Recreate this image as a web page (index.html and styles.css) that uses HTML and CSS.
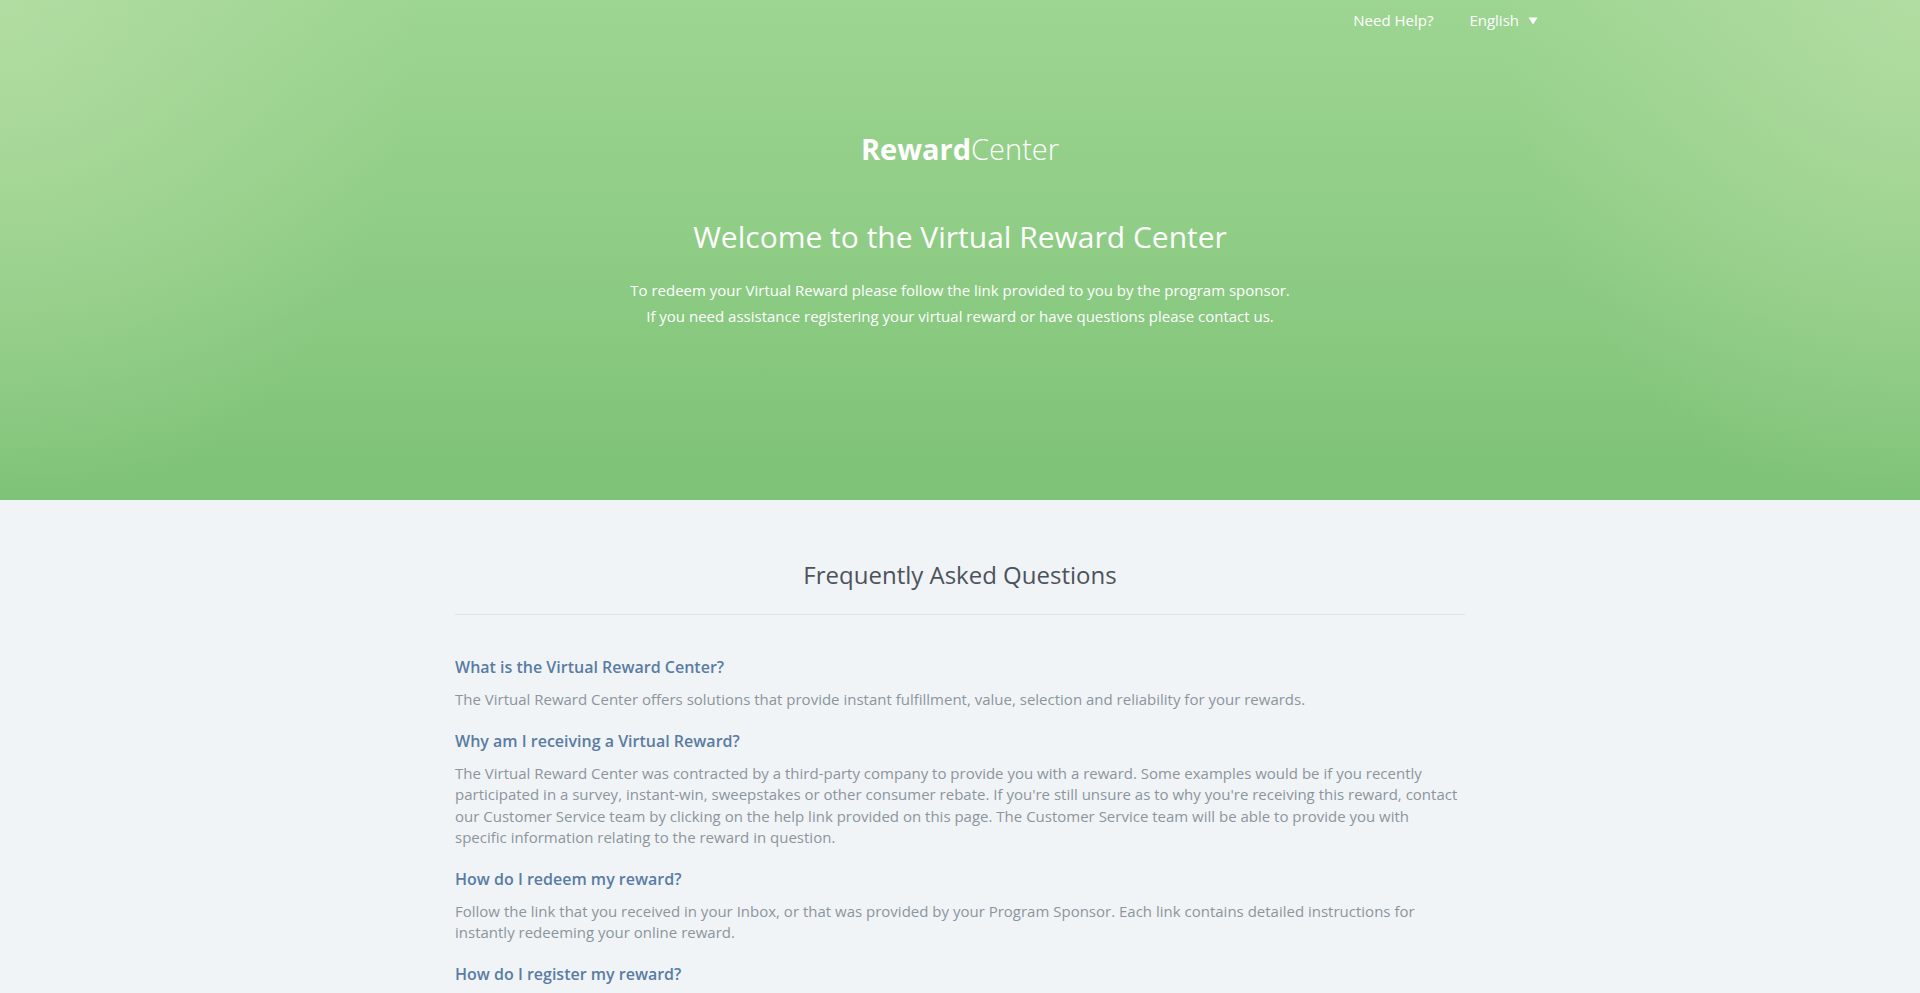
FILE: index.html
```html
<!DOCTYPE html>
<html lang="en">
<head>
<meta charset="utf-8">
<title>Virtual Reward Center</title>
<link rel="stylesheet" href="styles.css">
</head>
<body>
<header class="hero">
  <nav class="topnav">
    <a class="nav-link" href="#">Need Help?</a>
    <a class="nav-link lang" href="#">English
      <svg class="caret" width="10" height="8" viewBox="0 0 10 8" aria-hidden="true"><path d="M0.5 0.5 H9.5 L5 7.5 Z" fill="#ffffff"/></svg>
    </a>
  </nav>
  <div class="logo"><span class="logo-bold">Reward</span><span class="logo-light">Center</span></div>
  <h1 class="hero-title">Welcome to the Virtual Reward Center</h1>
  <p class="hero-text">To redeem your Virtual Reward please follow the link provided to you by the program sponsor.<br>If you need assistance registering your virtual reward or have questions please contact us.</p>
</header>
<main class="faq">
  <h2 class="faq-title">Frequently Asked Questions</h2>
  <section class="faq-list">
    <h3 class="q">What is the Virtual Reward Center?</h3>
    <p class="a">The Virtual Reward Center offers solutions that provide instant fulfillment, value, selection and reliability for your rewards.</p>
    <h3 class="q">Why am I receiving a Virtual Reward?</h3>
    <p class="a">The Virtual Reward Center was contracted by a third-party company to provide you with a reward. Some examples would be if you recently participated in a survey, instant-win, sweepstakes or other consumer rebate. If you're still unsure as to why you're receiving this reward, contact our Customer Service team by clicking on the help link provided on this page. The Customer Service team will be able to provide you with specific information relating to the reward in question.</p>
    <h3 class="q">How do I redeem my reward?</h3>
    <p class="a">Follow the link that you received in your Inbox, or that was provided by your Program Sponsor. Each link contains detailed instructions for instantly redeeming your online reward.</p>
    <h3 class="q">How do I register my reward?</h3>
    <p class="a">Follow the link that you received in your Inbox, or that was provided by your Program Sponsor. Each link contains detailed instructions for registering your online reward.</p>
  </section>
</main>
</body>
</html>
```
FILE: styles.css
```css
html, body {
  margin: 0;
  padding: 0;
}
body {
  font-family: "Open Sans", "Noto Sans", "Liberation Sans", sans-serif;
  background: #f0f4f7;
  color: #8d959c;
}
.hero {
  height: 500px;
  box-sizing: border-box;
  text-align: center;
  color: #ffffff;
  background:
    radial-gradient(ellipse 420px 520px at 0% 0%, rgba(192, 226, 172, 0.6), rgba(192, 226, 172, 0) 100%),
    radial-gradient(ellipse 420px 520px at 100% 0%, rgba(192, 226, 172, 0.6), rgba(192, 226, 172, 0) 100%),
    linear-gradient(to bottom, #9dd592 0%, #90cd86 45%, #7dc276 100%);
}
.topnav {
  width: 1170px;
  margin: 0 auto;
  box-sizing: border-box;
  padding: 0 7px 0 0;
  height: 40px;
  display: flex;
  justify-content: flex-end;
  gap: 36px;
  font-size: 15px;
  line-height: 20px;
}
.nav-link {
  color: #ffffff;
  text-decoration: none;
  display: flex;
  align-items: center;
}
.caret {
  margin-left: 9px;
  margin-top: 1px;
}
.logo {
  margin-top: 89px;
  font-size: 29px;
  line-height: 40px;
  letter-spacing: 0;
}
.logo-bold {
  font-weight: 700;
}
.logo-light {
  font-weight: 300;
}
.hero-title {
  margin: 48px 0 0;
  font-size: 30px;
  line-height: 40px;
  font-weight: 400;
}
.hero-text {
  margin: 20px 0 0;
  font-size: 15px;
  line-height: 26px;
}
.faq {
  width: 1010px;
  margin: 0 auto;
  padding-top: 58px;
}
.faq-title {
  margin: 0;
  padding-bottom: 22px;
  border-bottom: 1px solid #dde3e8;
  text-align: center;
  font-size: 24px;
  line-height: 34px;
  font-weight: 400;
  color: #4d535a;
}
.faq-list {
  padding-top: 22px;
}
.q {
  margin: 19px 0 0;
  font-size: 16px;
  line-height: 22px;
  font-weight: 600;
  color: #5a7ca3;
}
.a {
  margin: 11px 0 0;
  padding-right: 4px;
  font-size: 15px;
  line-height: 21.5px;
  color: #8d959c;
}
```
